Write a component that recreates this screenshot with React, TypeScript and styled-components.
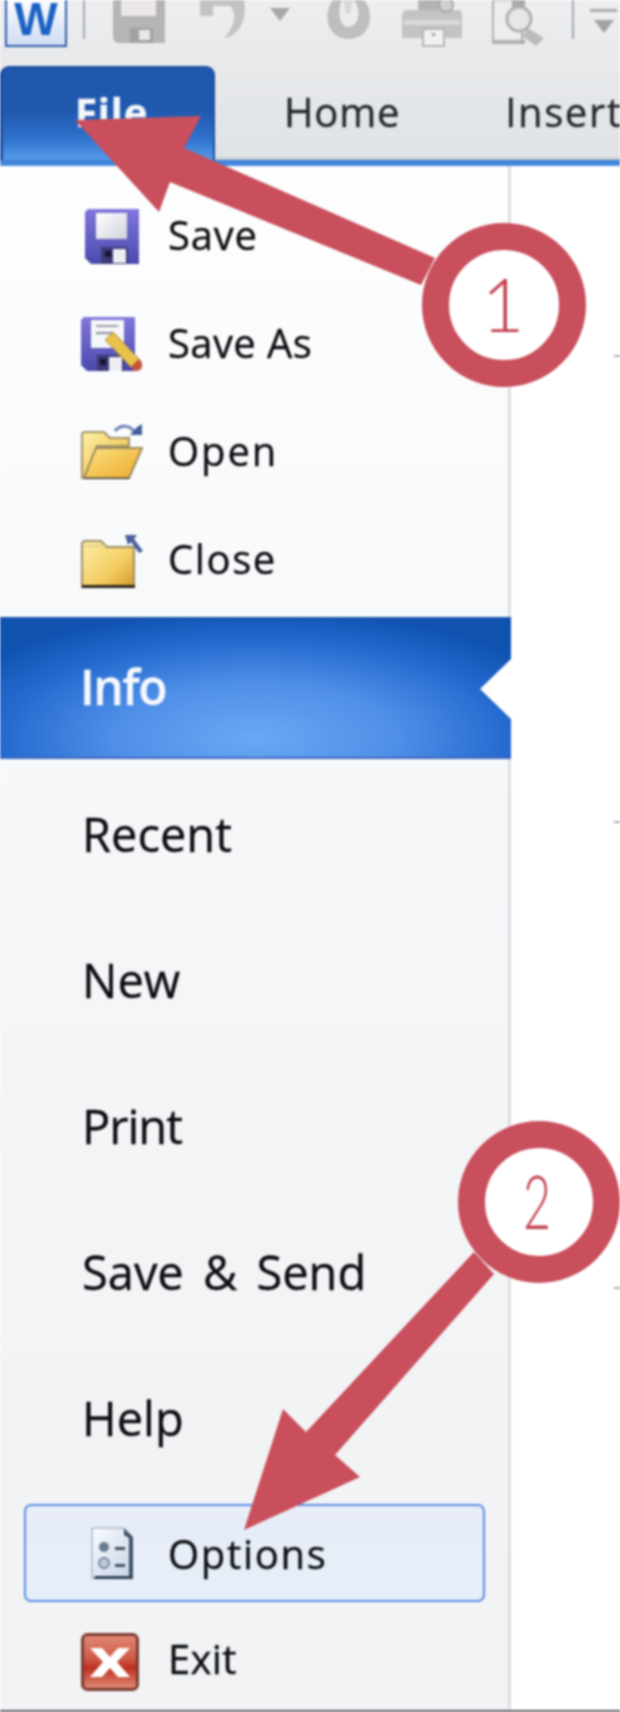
import React from "react";
import styled, {createGlobalStyle} from "styled-components";

const Global = createGlobalStyle`
    html, body {
        margin: 0;
        padding: 0;
        background: #fff;
    }
    * {
        box-sizing: border-box;
    }
`

const Frame = styled.div`
    position: relative;
    width: 620px;
    height: 1712px;
    overflow: hidden;
    display: flex;
    flex-direction: column;
    background: #fff;
    font-family: "Open Sans", "Liberation Sans", sans-serif;
    color: #0b0d10;
    -webkit-text-stroke: 0.35px currentColor;
    filter: blur(0.8px);
`

const Header = styled.header`
    flex: none;
    background: linear-gradient(#eceef0, #e7e9eb 40%, #dfe3e6);
`

const Toolbar = styled.div`
    height: 66px;
    display: flex;
    align-items: flex-start;
    overflow: hidden;
`

const ToolSlot = styled.div<{ $left: number }>`
    flex: none;
    margin-left: ${p => p.$left}px;
    display: flex;
`

const ToolSep = styled.div<{ $left: number }>`
    flex: none;
    width: 2px;
    height: 39px;
    margin-left: ${p => p.$left}px;
    background: #a6a9ad;
`

const Tabs = styled.nav`
    height: 94px;
    display: flex;
    align-items: stretch;
    overflow: hidden;
    box-shadow: inset 0 -4px 3px -2px #c3c6c9;
`

const FileTab = styled.div`
    flex: none;
    width: 215px;
    padding: 17px 0 0 72px;
    font-size: 40px;
    font-weight: 700;
    letter-spacing: 0.8px;
    line-height: 54px;
    color: #f4f7fc;
    border: 2px solid #1c4ea3;
    border-bottom: none;
    border-left-width: 3px;
    border-radius: 9px 9px 0 0;
    background: linear-gradient(#2058ab, #2058ae 45%, #2d6fca 75%, #559be9);
`

const Tab = styled.div<{ $left: number; $spacing: number }>`
    flex: none;
    margin-left: ${p => p.$left}px;
    padding-top: 19px;
    font-size: 40px;
    letter-spacing: ${p => p.$spacing}px;
    line-height: 54px;
    color: #24272b;
`

const BlueLine = styled.div`
    height: 6px;
    background: linear-gradient(#3a7dd6, #4c8fe2);
`

const Body = styled.main`
    flex: 1;
    min-height: 0;
    display: flex;
    overflow: hidden;
    border-bottom: 2px solid #55585c;
`

const Sidebar = styled.aside`
    flex: none;
    width: 511px;
    padding-top: 16px;
    display: flex;
    flex-direction: column;
    border-right: 3px solid #dcdee1;
    background: linear-gradient(#fdfefe, #f8f9fb 30%, #f2f4f6 70%, #f1f3f5);
`

const CommandRow = styled.div`
    flex: none;
    height: 108px;
    padding-left: 81px;
    display: flex;
    align-items: center;
    gap: 25px;
    font-size: 40px;
    letter-spacing: 0.3px;
`

const CommandLabel = styled.span<{ $spacing: number }>`
    margin-bottom: 4px;
    letter-spacing: ${p => p.$spacing}px;
`

const ExitRow = styled(CommandRow)`
    height: 104px;
    padding-top: 9px;
    padding-left: 79px;
`

const OptionsRow = styled(CommandRow)`
    height: 98px;
    margin: 15px 23px 0 24px;
    padding-left: 55px;
    letter-spacing: 1.7px;
    border: 2px solid #5d8ae6;
    border-radius: 7px;
    background: linear-gradient(#e8edf8, #e6eff9);
`

const IconSlot = styled.span<{ $down?: number }>`
    flex: none;
    width: 62px;
    margin-top: ${p => p.$down ?? 0}px;
    display: flex;
    justify-content: center;
`

const ExitLabel = styled.span`
    margin-left: 2px;
`

const ActiveItem = styled.div`
    position: relative;
    flex: none;
    height: 142px;
    margin-top: 3px;
    margin-right: -3px;
    padding: 0 0 4px 80px;
    display: flex;
    align-items: center;
    font-size: 48px;
    font-weight: 600;
    letter-spacing: -1.4px;
    color: #f6f9fe;
    border-top: 2px solid #1d55ab;
    border-bottom: 2px solid #3f66bd;
    background:
        radial-gradient(ellipse 66% 94% at 50% 86%, #68a9f4, #4f8fe8 42%, #2369ce 76%, #0f52b0);

    &::after {
        content: "";
        position: absolute;
        right: 0;
        top: 40px;
        width: 31px;
        height: 60px;
        background: #fff;
        clip-path: polygon(100% 0, 0 50%, 100% 100%);
    }
`

const TabItem = styled.div<{ $spacing?: number }>`
    flex: none;
    height: 146px;
    padding: 4px 0 0 82px;
    display: flex;
    align-items: center;
    font-size: 47px;
    letter-spacing: ${p => p.$spacing ?? 0}px;
`

const SendLabel = styled.span`
    word-spacing: 7px;
`

const Content = styled.section`
    flex: 1;
    padding-top: 189px;
    display: flex;
    flex-direction: column;
    align-items: flex-end;
    gap: 464px;
`

const RulerTick = styled.i`
    display: block;
    width: 6px;
    height: 2px;
    background: #a9abae;
`

const Callouts = styled.svg`
    position: absolute;
    left: 0;
    top: 0;
    pointer-events: none;
`

const CalloutDigit = styled.text`
    font-family: Lato, "Open Sans", sans-serif;
    font-weight: 300;
    font-size: 74px;
    fill: #c2404e;
    text-anchor: middle;
    -webkit-text-stroke: 0;
`

const LogoLetter = styled.text`
    font-family: "Liberation Sans", Arial, sans-serif;
    font-weight: 700;
    font-size: 46px;
    fill: #1b62c4;
    text-anchor: middle;
`

const WordIcon = () => (
    <svg width={62} height={47} viewBox="0 0 62 47">
        <defs>
            <linearGradient id="wordBg" x1="0" y1="0" x2="0" y2="1">
                <stop offset="0" stopColor="#fff"/>
                <stop offset="1" stopColor="#cfdcf4"/>
            </linearGradient>
        </defs>
        <rect x={1} y={-4} width={60} height={50} fill="url(#wordBg)" stroke="#2f5fa8" strokeWidth={2}/>
        <LogoLetter x={31} y={35}>W</LogoLetter>
    </svg>
)

const GrayFloppy = () => (
    <svg width={52} height={44} viewBox="0 0 52 44">
        <path d="M0 0H52V43H4L0 39Z" fill="#b4b5b7"/>
        <rect x={8} y={0} width={35} height={16} fill="#ece7e8"/>
        <path d="M17 28H40V43H17Z" fill="#a0a1a3"/>
        <rect x={26} y={30} width={11} height={10} fill="#e8e8e8"/>
    </svg>
)

const GrayUndo = () => (
    <svg width={48} height={40} viewBox="0 0 48 40">
        <path d="M0 0V16H13V6H30C35 10 36 20 30 30L25 38C38 36 48 20 44 0Z" fill="#c2c3c5"/>
    </svg>
)

const GrayCaret = () => (
    <svg width={20} height={21} viewBox="0 0 20 21">
        <path d="M0 8H20L10 21Z" fill="#a5a7a9"/>
    </svg>
)

const GrayRedo = () => (
    <svg width={47} height={40} viewBox="0 0 47 40">
        <path d="M8 0C-3 14 2 39 24 39C45 39 51 14 39 0H29C36 8 35 26 24 27C14 28 12 10 17 0Z" fill="#bdbec0"/>
        <path d="M18 0H28L25 14L21 14Z" fill="#d8d9db"/>
    </svg>
)

const GrayPrinter = () => (
    <svg width={60} height={47} viewBox="0 0 60 47">
        <path d="M4 10H56C59 10 60 13 60 16V38H0V16C0 13 2 10 4 10Z" fill="#c2c3c5"/>
        <rect x={2} y={20} width={56} height={5} fill="#d8d9db"/>
        <rect x={16} y={0} width={30} height={10} fill="#b2b3b5"/>
        <circle cx={44} cy={5} r={7} fill="#cfd0d2" stroke="#a8a9ab" strokeWidth={2}/>
        <rect x={21} y={29} width={21} height={17} fill="#f0f0f1" stroke="#b6b7b9" strokeWidth={2}/>
        <rect x={30} y={33} width={3} height={3} fill="#a0a1a3"/>
    </svg>
)

const GrayPreview = () => (
    <svg width={55} height={47} viewBox="0 0 55 47">
        <path d="M1 0H30V42H1Z" fill="#eceded" stroke="#b2b3b5" strokeWidth={2}/>
        <path d="M0 40H33V44H0Z" fill="#afb0b2"/>
        <path d="M20 0H33V8H20Z" fill="#a8a9ab"/>
        <path d="M36 28L52 38L44 46L30 36Z" fill="#bbbcbe"/>
        <circle cx={27} cy={19} r={12} fill="#e6e7e8" stroke="#b0b1b3" strokeWidth={3}/>
    </svg>
)

const GrayCustomize = () => (
    <svg width={27} height={33} viewBox="0 0 27 33">
        <rect x={0} y={9} width={27} height={3} fill="#a9abad"/>
        <path d="M4 20H24L14 33Z" fill="#a0a2a4"/>
    </svg>
)

const Gradients = () => (
    <svg width={0} height={0} style={{position: "absolute"}}>
        <defs>
            <linearGradient id="floppyBody" x1="0" y1="0" x2="0" y2="1">
                <stop offset="0" stopColor="#8178dc"/>
                <stop offset="1" stopColor="#4b49ad"/>
            </linearGradient>
            <linearGradient id="floppyLabel" x1="0" y1="0" x2="1" y2="1">
                <stop offset="0" stopColor="#fff"/>
                <stop offset="1" stopColor="#d0d2da"/>
            </linearGradient>
            <linearGradient id="folderFill" x1="0" y1="0" x2="1" y2="1">
                <stop offset="0" stopColor="#fdf0a8"/>
                <stop offset="0.6" stopColor="#f3cd63"/>
                <stop offset="1" stopColor="#d69a2c"/>
            </linearGradient>
            <linearGradient id="folderFront" x1="0" y1="0" x2="1" y2="1">
                <stop offset="0" stopColor="#fbe284"/>
                <stop offset="1" stopColor="#eda928"/>
            </linearGradient>
            <linearGradient id="optionsFill" x1="0" y1="0" x2="1" y2="1">
                <stop offset="0" stopColor="#fafcff"/>
                <stop offset="1" stopColor="#c6d3e6"/>
            </linearGradient>
            <linearGradient id="exitFill" x1="0" y1="0" x2="0" y2="1">
                <stop offset="0" stopColor="#e08a78"/>
                <stop offset="0.45" stopColor="#cd5a45"/>
                <stop offset="0.6" stopColor="#be2f20"/>
                <stop offset="1" stopColor="#e08f7a"/>
            </linearGradient>
        </defs>
    </svg>
)

const SaveIcon = () => (
    <svg width={54} height={55} viewBox="0 0 54 55">
        <path d="M3 0H54V55H6L0 49V3Z" fill="url(#floppyBody)"/>
        <rect x={11} y={4} width={31} height={26} fill="url(#floppyLabel)"/>
        <rect x={16} y={38} width={27} height={17} fill="#3d3a78"/>
        <rect x={28} y={40} width={13} height={14} fill="#eceef2"/>
        <rect x={20} y={42} width={6} height={6} fill="#14152e"/>
    </svg>
)

const SaveAsIcon = () => (
    <svg width={62} height={55} viewBox="0 0 62 55">
        <path d="M3 0H54V54H6L0 48V3Z" fill="url(#floppyBody)"/>
        <rect x={10} y={3} width={33} height={28} fill="#f6f7fa"/>
        <rect x={15} y={8} width={22} height={2} fill="#9a9ca4"/>
        <rect x={15} y={15} width={18} height={2} fill="#8a8c94"/>
        <rect x={16} y={38} width={27} height={16} fill="#3d3a78"/>
        <rect x={28} y={40} width={13} height={14} fill="#eceef2"/>
        <rect x={19} y={42} width={6} height={6} fill="#14152e"/>
        <path d="M24 23L32 15L58 42L50 50Z" fill="#e9c24a" stroke="#a58a45" strokeWidth={1}/>
        <path d="M50 50L58 42C62 45 62 50 59 53C56 55 52 54 50 50Z" fill="#c9543e"/>
    </svg>
)

const OpenIcon = () => (
    <svg width={62} height={56} viewBox="0 0 62 56">
        <path d="M1 11C1 9 2 8 4 8H23L29 14H48V22H16L7 54H1Z" fill="url(#folderFill)" stroke="#a09268" strokeWidth={2}/>
        <path d="M15 24H61L48 54H3Z" fill="url(#folderFront)" stroke="#9c8a5c" strokeWidth={2}/>
        <path d="M3 54H48L49 55H3Z" fill="#2a2318"/>
        <path d="M34 7C40 0 50 1 54 9" fill="none" stroke="#6b82b8" strokeWidth={3}/>
        <path d="M49 11H61V0L56 3Z" fill="#465f9f"/>
    </svg>
)

const CloseIcon = () => (
    <svg width={62} height={55} viewBox="0 0 62 55">
        <path d="M1 12C1 9 2 8 4 8H20L26 14H53V54H1Z" fill="url(#folderFill)" stroke="#9c8e66" strokeWidth={2}/>
        <path d="M3 13H24" stroke="#e6d68f" strokeWidth={3}/>
        <rect x={1} y={52} width={53} height={3} fill="#2a2318"/>
        <path d="M44 2H56L53 6L62 18L58 20L50 9L47 12Z" fill="#4a5f9c"/>
    </svg>
)

const OptionsIcon = () => (
    <svg width={42} height={52} viewBox="0 0 42 52">
        <path d="M1 1H32L41 11V51H1Z" fill="url(#optionsFill)" stroke="#a9b8cf" strokeWidth={1.5}/>
        <path d="M4 49H42V52H3Z" fill="#2f3f58"/>
        <path d="M38 11V50H42V10L33 1V8Z" fill="#3f5069"/>
        <circle cx={13} cy={20} r={5} fill="#6c7a91"/>
        <circle cx={13} cy={36} r={5} fill="#c3cbd8" stroke="#7986a0" strokeWidth={2}/>
        <rect x={24} y={20} width={10} height={3} fill="#46515f"/>
        <rect x={24} y={37} width={10} height={3} fill="#46515f"/>
    </svg>
)

const ExitIcon = () => (
    <svg width={58} height={58} viewBox="0 0 58 58">
        <rect x={1.5} y={1.5} width={55} height={55} rx={5} fill="url(#exitFill)" stroke="#7a3b30" strokeWidth={3}/>
        <path d="M9 15H21L29 24L37 15H49L36 29L49 44H37L29 35L21 44H9L22 29Z" fill="#fff"/>
    </svg>
)

const commands = [
    {label: "Save", spacing: 0.8, icon: <SaveIcon/>},
    {label: "Save As", spacing: 0.4, icon: <SaveAsIcon/>},
    {label: "Open", spacing: 1.9, icon: <OpenIcon/>},
    {label: "Close", spacing: 1.6, icon: <CloseIcon/>},
]

export default function App() {
    return (
        <Frame>
            <Global/>
            <Gradients/>
            <Header>
                <Toolbar>
                    <ToolSlot $left={5}><WordIcon/></ToolSlot>
                    <ToolSep $left={16}/>
                    <ToolSlot $left={28}><GrayFloppy/></ToolSlot>
                    <ToolSlot $left={35}><GrayUndo/></ToolSlot>
                    <ToolSlot $left={22}><GrayCaret/></ToolSlot>
                    <ToolSlot $left={35}><GrayRedo/></ToolSlot>
                    <ToolSlot $left={30}><GrayPrinter/></ToolSlot>
                    <ToolSlot $left={30}><GrayPreview/></ToolSlot>
                    <ToolSep $left={25}/>
                    <ToolSlot $left={16}><GrayCustomize/></ToolSlot>
                </Toolbar>
                <Tabs>
                    <FileTab>File</FileTab>
                    <Tab $left={69} $spacing={0.8}>Home</Tab>
                    <Tab $left={105} $spacing={1.6}>Insert</Tab>
                </Tabs>
                <BlueLine/>
            </Header>
            <Body>
                <Sidebar>
                    {commands.map(c => (
                        <CommandRow key={c.label}>
                            <IconSlot>{c.icon}</IconSlot>
                            <CommandLabel $spacing={c.spacing}>{c.label}</CommandLabel>
                        </CommandRow>
                    ))}
                    <ActiveItem>Info</ActiveItem>
                    <TabItem>Recent</TabItem>
                    <TabItem>New</TabItem>
                    <TabItem $spacing={-1}>Print</TabItem>
                    <TabItem><SendLabel>Save &amp; Send</SendLabel></TabItem>
                    <TabItem>Help</TabItem>
                    <OptionsRow>
                        <IconSlot><OptionsIcon/></IconSlot>
                        Options
                    </OptionsRow>
                    <ExitRow>
                        <IconSlot $down={6}><ExitIcon/></IconSlot>
                        <ExitLabel>Exit</ExitLabel>
                    </ExitRow>
                </Sidebar>
                <Content>
                    <RulerTick/>
                    <RulerTick/>
                    <RulerTick/>
                </Content>
            </Body>
            <Callouts width={620} height={1712} viewBox="0 0 620 1712">
                <polygon points="75,120 201,116 184,148 435,258 421,285 170,182 159,212" fill="#c94f5c"/>
                <circle cx={504} cy={305} r={68.5} fill="#fff" stroke="#c94f5c" strokeWidth={27}/>
                <CalloutDigit x={503} y={332}>1</CalloutDigit>
                <polygon points="474,1252 494,1274 335,1455 360,1477 244,1530 283,1409 306,1432" fill="#c94f5c"/>
                <circle cx={539} cy={1202} r={67.5} fill="#fff" stroke="#c94f5c" strokeWidth={27}/>
                <CalloutDigit x={537} y={1229} textLength={28} lengthAdjust="spacingAndGlyphs">2</CalloutDigit>
            </Callouts>
        </Frame>
    );
}
